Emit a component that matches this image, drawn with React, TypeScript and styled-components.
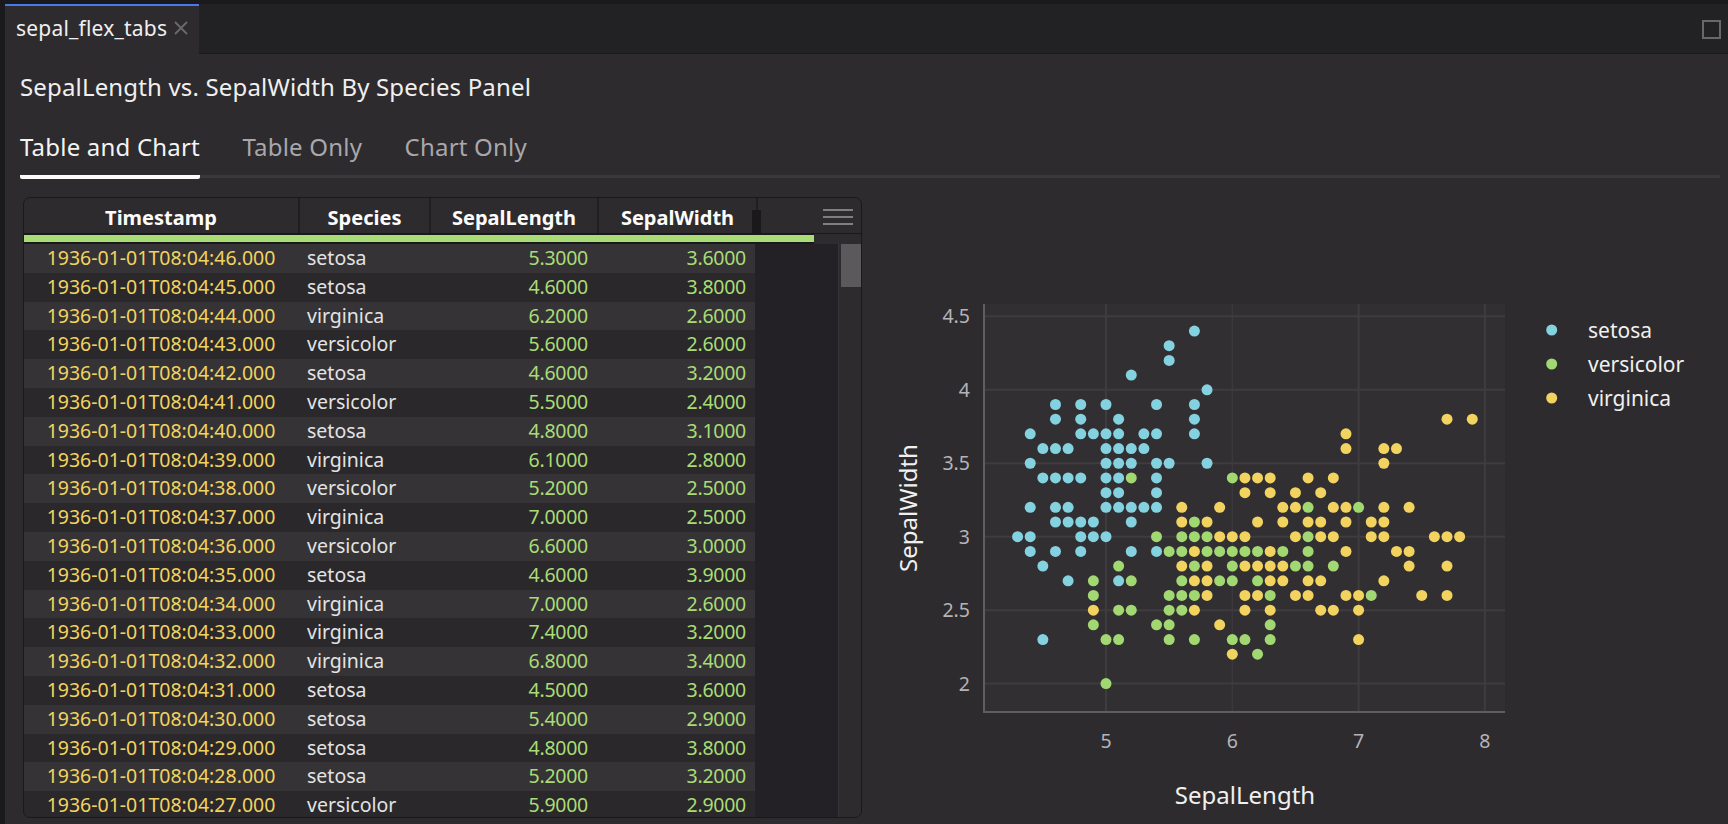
import React from 'react';
import styled, { createGlobalStyle } from 'styled-components';

const FONT = '"Noto Sans", "Open Sans", sans-serif';

const GlobalStyle = createGlobalStyle`
  html, body {
    margin: 0;
    padding: 0;
    background: #1a191c;
    font-family: ${FONT};
  }
`;

const Page = styled.div`
  display: flex;
  flex-direction: column;
  width: 1728px;
  height: 824px;
  padding: 4px 0 0 5px;
  box-sizing: border-box;
  overflow: hidden;
  background: #1a191c;
`;

const TabStrip = styled.div`
  display: flex;
  align-items: stretch;
  justify-content: space-between;
  flex: 0 0 50px;
  box-sizing: border-box;
  background: #222124;
  border-bottom: 1px solid #1a191c;
`;

const PanelTab = styled.div`
  display: flex;
  align-items: center;
  gap: 7px;
  width: 194px;
  box-sizing: border-box;
  padding: 0 0 4px 11px;
  margin-bottom: -1px;
  background: #2d2b2e;
  border-top: 2px solid #4878ea;
  color: #f0f0f0;
  font-size: 21px;
  letter-spacing: 0.2px;
`;

const MaximizeBox = styled.div`
  width: 19px;
  height: 19px;
  box-sizing: border-box;
  margin: 16px 7px 0 0;
  border: 2px solid #69676a;
`;

const Panel = styled.div`
  flex: 1;
  min-height: 0;
  display: flex;
  flex-direction: column;
  padding: 0 8px 0 15px;
  background: #2d2b2e;
`;

const Title = styled.h1`
  margin: 16px 0 0;
  height: 34px;
  line-height: 34px;
  font-size: 24px;
  font-weight: 400;
  letter-spacing: 0.16px;
  color: #f0f0f0;
`;

const NavBar = styled.nav`
  display: flex;
  gap: 42.5px;
  height: 59px;
  margin-top: 15px;
  box-sizing: border-box;
  border-bottom: 3px solid #3a383b;
`;

const NavItem = styled.div<{ $active?: boolean }>`
  height: 60px;
  box-sizing: border-box;
  padding-top: 12px;
  line-height: 32px;
  font-size: 24px;
  letter-spacing: 0.2px;
  color: ${({ $active }) => ($active ? '#f4f4f4' : '#a9a7aa')};
  border-bottom: 4px solid ${({ $active }) => ($active ? '#fcfcfa' : 'transparent')};
  border-radius: 0 0 2px 2px;
`;

const Content = styled.div`
  flex: 1;
  min-height: 0;
  display: flex;
  gap: 8px;
  padding: 19px 0 0 3px;
`;

const Grid = styled.div`
  flex: 0 0 839px;
  height: 621px;
  display: flex;
  flex-direction: column;
  box-sizing: border-box;
  border: 1px solid #19181b;
  border-radius: 7px;
  overflow: hidden;
  background: #2d2b2e;
`;

const HeaderRow = styled.div`
  position: relative;
  display: flex;
  flex: 0 0 36px;
  box-sizing: border-box;
  border-bottom: 1px solid #19181b;
`;

const HeaderCell = styled.div<{ $width: number }>`
  flex: 0 0 ${({ $width }) => $width}px;
  height: 35px;
  box-sizing: border-box;
  border-right: 2px solid #1f1e21;
  text-align: center;
  line-height: 39px;
  font-size: 20px;
  font-weight: 700;
  color: #fcfcfa;
`;

const ResizeHandle = styled.div`
  position: absolute;
  left: 728px;
  top: 12px;
  width: 9px;
  height: 23px;
  background: #19181b;
`;

const MenuIcon = styled.svg`
  position: absolute;
  left: 799px;
  top: 10px;
`;

const QuickBar = styled.div`
  flex: 0 0 10px;
  box-sizing: border-box;
  padding: 1px 0 2px;
  background: #19181b linear-gradient(#2d2b2e, #2d2b2e) right / 47px 100% no-repeat;
`;

const QuickFill = styled.div`
  width: 790px;
  height: 7px;
  background: #a9dc76;
`;

const GridBody = styled.div`
  flex: 1;
  min-height: 0;
  display: flex;
  background: #232125;
`;

const Rows = styled.div`
  flex: 0 0 731px;
  min-width: 0;
`;

const Row = styled.div<{ $odd: boolean }>`
  display: flex;
  height: 28.8px;
  line-height: 28px;
  font-size: 19.5px;
  background: ${({ $odd }) => ($odd ? '#2a282b' : '#353336')};
`;

const Cell = styled.div<{ $width: number; $kind: 'time' | 'text' | 'num'; $pad?: number }>`
  flex: 0 0 ${({ $width }) => $width}px;
  box-sizing: border-box;
  letter-spacing: ${({ $kind }) => ($kind === 'num' ? '-0.25px' : '0')};
  padding: ${({ $kind, $pad }) =>
    $kind === 'text' ? '0 0 0 7px' : $kind === 'num' ? `0 ${$pad}px 0 0` : '0 2px 0 0'};
  text-align: ${({ $kind }) => ($kind === 'time' ? 'center' : $kind === 'num' ? 'right' : 'left')};
  color: ${({ $kind }) =>
    $kind === 'time' ? '#f2d35f' : $kind === 'num' ? '#a9dc76' : '#e3e3e3'};
`;

const Spacer = styled.div`
  flex: 1;
`;

const Scrollbar = styled.div`
  flex: 0 0 23px;
  box-sizing: border-box;
  padding-left: 2px;
  background: #2d2b2e;
  border-left: 1px solid #363437;
`;

const ScrollThumb = styled.div`
  height: 43px;
  background: #5b595c;
`;

const ChartSvg = styled.svg`
  flex: 0 0 auto;
  font-family: ${FONT};
`;

const TickText = styled.text`
  font-size: 19.5px;
  fill: #b5b3b6;
`;

const AxisTitle = styled.text`
  font-size: 24px;
  fill: #f0f0f0;
`;

const LegendText = styled.text`
  font-size: 21px;
  fill: #f0f0f0;
`;

const columns = [276, 131, 168, 159];

type Species = 'setosa' | 'versicolor' | 'virginica';

const rows: [Species, string, string][] = [
  ['setosa', '5.3000', '3.6000'],
  ['setosa', '4.6000', '3.8000'],
  ['virginica', '6.2000', '2.6000'],
  ['versicolor', '5.6000', '2.6000'],
  ['setosa', '4.6000', '3.2000'],
  ['versicolor', '5.5000', '2.4000'],
  ['setosa', '4.8000', '3.1000'],
  ['virginica', '6.1000', '2.8000'],
  ['versicolor', '5.2000', '2.5000'],
  ['virginica', '7.0000', '2.5000'],
  ['versicolor', '6.6000', '3.0000'],
  ['setosa', '4.6000', '3.9000'],
  ['virginica', '7.0000', '2.6000'],
  ['virginica', '7.4000', '3.2000'],
  ['virginica', '6.8000', '3.4000'],
  ['setosa', '4.5000', '3.6000'],
  ['setosa', '5.4000', '2.9000'],
  ['setosa', '4.8000', '3.8000'],
  ['setosa', '5.2000', '3.2000'],
  ['versicolor', '5.9000', '2.9000'],
];

// dots per species as [SepalWidth, SepalLength values]
const points: Record<Species, [number, number[]][]> = {
  setosa: [
    [4.4, [5.7]],
    [4.3, [5.5]],
    [4.2, [5.5]],
    [4.1, [5.2]],
    [4.0, [5.8]],
    [3.9, [4.6, 4.8, 5.0, 5.4, 5.7]],
    [3.8, [4.6, 4.8, 5.1, 5.7]],
    [3.7, [4.4, 4.8, 4.9, 5.0, 5.1, 5.3, 5.4, 5.7]],
    [3.6, [4.5, 4.6, 4.7, 5.0, 5.1, 5.2, 5.3]],
    [3.5, [4.4, 5.0, 5.1, 5.2, 5.4, 5.5, 5.8]],
    [3.4, [4.5, 4.6, 4.7, 4.8, 5.0, 5.1, 5.4]],
    [3.3, [5.0, 5.1, 5.4]],
    [3.2, [4.4, 4.6, 4.7, 5.0, 5.1, 5.2, 5.3, 5.4]],
    [3.1, [4.6, 4.7, 4.8, 4.9, 5.2]],
    [3.0, [4.3, 4.4, 4.8, 4.9, 5.0]],
    [2.9, [4.4, 4.6, 4.8, 5.2, 5.4]],
    [2.8, [4.5]],
    [2.7, [4.7, 5.1]],
    [2.3, [4.5]],
  ],
  versicolor: [
    [3.4, [5.2, 6.0]],
    [3.2, [6.6, 7.0]],
    [3.1, [5.7]],
    [3.0, [5.4, 5.6, 5.7, 5.8, 6.6]],
    [2.9, [5.5, 5.6, 5.8, 5.9, 6.0, 6.1, 6.2, 6.4, 6.6]],
    [2.8, [5.1, 5.7, 6.0, 6.5, 6.6, 6.8]],
    [2.7, [4.9, 5.2, 5.6, 5.9, 6.0, 6.2]],
    [2.6, [4.9, 5.5, 5.6, 5.7, 6.3, 7.1]],
    [2.5, [5.1, 5.2, 5.5, 5.6]],
    [2.4, [4.9, 5.4, 5.5, 6.3]],
    [2.3, [5.0, 5.1, 5.5, 5.7, 6.0, 6.1, 6.3]],
    [2.2, [6.2]],
    [2.0, [5.0]],
  ],
  virginica: [
    [3.8, [7.7, 7.9]],
    [3.7, [6.9]],
    [3.6, [6.9, 7.2, 7.3]],
    [3.5, [7.2]],
    [3.4, [6.1, 6.2, 6.3, 6.6, 6.8]],
    [3.3, [6.1, 6.3, 6.5, 6.7]],
    [3.2, [5.6, 5.9, 6.4, 6.5, 6.8, 6.9, 7.2, 7.4]],
    [3.1, [5.6, 5.8, 6.2, 6.4, 6.6, 6.7, 6.9, 7.1, 7.2]],
    [3.0, [5.9, 6.0, 6.1, 6.5, 6.7, 6.8, 7.1, 7.2, 7.6, 7.7, 7.8]],
    [2.9, [5.7, 6.3, 6.9, 7.3, 7.4]],
    [2.8, [5.6, 5.8, 6.1, 6.2, 6.3, 6.4, 7.4, 7.7]],
    [2.7, [5.7, 5.8, 6.3, 6.4, 6.6, 6.7, 7.2]],
    [2.6, [5.8, 6.1, 6.2, 6.5, 6.6, 6.9, 7.0, 7.5, 7.7]],
    [2.5, [4.9, 5.7, 6.1, 6.3, 6.7, 6.8, 7.0]],
    [2.4, [5.9]],
    [2.3, [7.0]],
    [2.2, [6.0]],
  ],
};

const colors: Record<Species, string> = {
  setosa: '#84d2e0',
  versicolor: '#a2d872',
  virginica: '#f2d35f',
};

const scaleX = (v: number) => 1106 + (v - 5) * 126.3;
const scaleY = (v: number) => 536.7 - (v - 3) * 146.9;

const xTicks = [5, 6, 7, 8];
const yTicks = [2, 2.5, 3, 3.5, 4, 4.5];
const speciesList: Species[] = ['setosa', 'versicolor', 'virginica'];

const Chart = () => (
  <ChartSvg width={858} height={627} viewBox="870 197 858 627">
    <rect x={984} y={304} width={521} height={408} fill="#322f33" />
    {xTicks.map((t) => (
      <line key={t} x1={scaleX(t)} x2={scaleX(t)} y1={304} y2={712} stroke="#3e3c3f" strokeWidth={t === 6 ? 1.2 : 2} />
    ))}
    {yTicks.map((t) => (
      <line key={t} x1={984} x2={1505} y1={scaleY(t)} y2={scaleY(t)} stroke="#3e3c3f" strokeWidth={2} />
    ))}
    <path d="M984 304V712H1505" fill="none" stroke="#5f5d60" strokeWidth={2} />
    {speciesList.map((s) =>
      points[s].map(([y, xs]) =>
        xs.map((x) => <circle key={`${s}-${x}-${y}`} cx={scaleX(x)} cy={scaleY(y)} r={5.5} fill={colors[s]} />),
      ),
    )}
    {xTicks.map((t) => (
      <TickText key={t} x={scaleX(t)} y={748} textAnchor="middle">
        {t}
      </TickText>
    ))}
    {yTicks.map((t) => (
      <TickText key={t} x={970} y={scaleY(t) + 7} textAnchor="end">
        {t}
      </TickText>
    ))}
    <AxisTitle x={1245} y={804} textAnchor="middle">
      SepalLength
    </AxisTitle>
    <AxisTitle transform="translate(917 508) rotate(-90)" textAnchor="middle">
      SepalWidth
    </AxisTitle>
    {speciesList.map((s, i) => (
      <g key={s}>
        <circle cx={1551.7} cy={330 + i * 34} r={5.5} fill={colors[s]} />
        <LegendText x={1588} y={338 + i * 34}>
          {s}
        </LegendText>
      </g>
    ))}
  </ChartSvg>
);

const App = () => (
  <Page>
    <GlobalStyle />
    <TabStrip>
      <PanelTab>
        sepal_flex_tabs
        <svg width="14" height="14" viewBox="0 0 14 14" fill="none" stroke="#6b696c" strokeWidth="1.8">
          <path d="M1 1l12 12M13 1L1 13" />
        </svg>
      </PanelTab>
      <MaximizeBox />
    </TabStrip>
    <Panel>
      <Title>SepalLength vs. SepalWidth By Species Panel</Title>
      <NavBar>
        <NavItem $active>Table and Chart</NavItem>
        <NavItem>Table Only</NavItem>
        <NavItem>Chart Only</NavItem>
      </NavBar>
      <Content>
        <Grid>
          <HeaderRow>
            {['Timestamp', 'Species', 'SepalLength', 'SepalWidth'].map((name, i) => (
              <HeaderCell key={name} $width={columns[i]}>
                {name}
              </HeaderCell>
            ))}
            <ResizeHandle />
            <MenuIcon width="30" height="18" viewBox="0 0 30 18" stroke="#807e81" strokeWidth="2">
              <path d="M0 2h30M0 9h30M0 16h30" />
            </MenuIcon>
          </HeaderRow>
          <QuickBar>
            <QuickFill />
          </QuickBar>
          <GridBody>
            <Rows>
              {rows.map(([species, length, width], i) => (
                <Row key={i} $odd={i % 2 === 1}>
                  <Cell $width={columns[0]} $kind="time">
                    1936-01-01T08:04:{46 - i}.000
                  </Cell>
                  <Cell $width={columns[1]} $kind="text">
                    {species}
                  </Cell>
                  <Cell $width={columns[2]} $kind="num" $pad={11}>
                    {length}
                  </Cell>
                  <Cell $width={columns[3]} $kind="num" $pad={12}>
                    {width}
                  </Cell>
                </Row>
              ))}
            </Rows>
            <Spacer />
            <Scrollbar>
              <ScrollThumb />
            </Scrollbar>
          </GridBody>
        </Grid>
        <Chart />
      </Content>
    </Panel>
  </Page>
);

export default App;
